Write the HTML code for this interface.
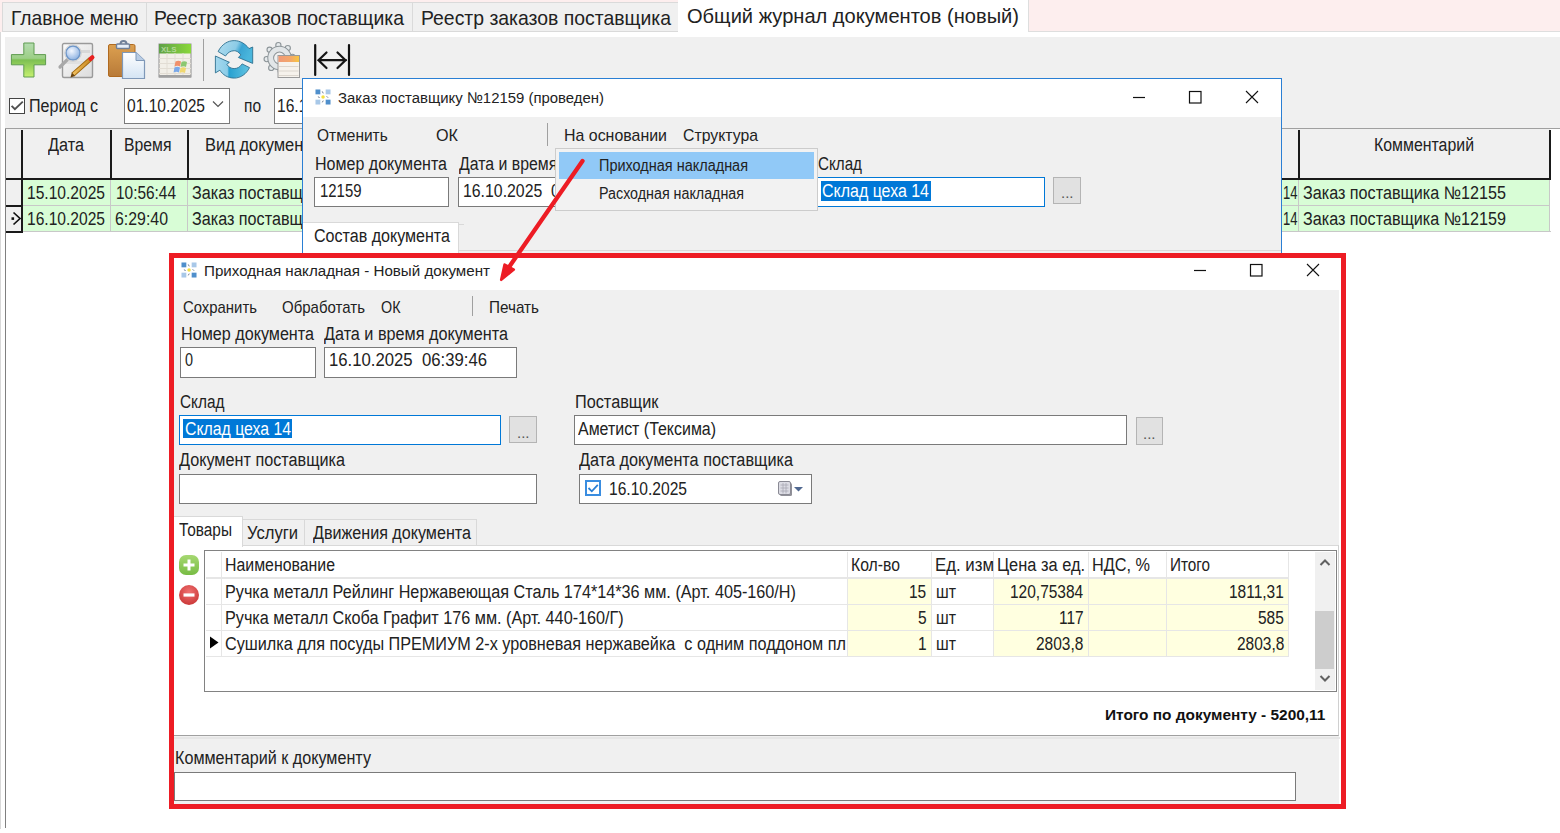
<!DOCTYPE html>
<html><head><meta charset="utf-8"><style>
html,body{margin:0;padding:0;}
body{width:1560px;height:833px;position:relative;overflow:hidden;background:#fff;font-family:"Liberation Sans",sans-serif;}
.t{position:absolute;line-height:1;white-space:pre;}
.b{position:absolute;box-sizing:border-box;}
svg{position:absolute;overflow:visible;}
</style></head><body>
<div class="b" style="left:0px;top:0px;width:1560px;height:32px;background:#fdeeee;"></div>
<div class="b" style="left:0px;top:32px;width:1560px;height:5px;background:#fff;"></div>
<div class="b" style="left:0px;top:32px;width:1px;height:797px;background:#d9d9d9;"></div>
<div class="b" style="left:2px;top:2px;width:145px;height:30px;background:#f0f0f0;border:1px solid #dadada;"></div>
<div class="b" style="left:146px;top:2px;width:267px;height:30px;background:#f0f0f0;border:1px solid #dadada;"></div>
<div class="b" style="left:412px;top:2px;width:267px;height:30px;background:#f0f0f0;border:1px solid #dadada;"></div>
<div class="b" style="left:678px;top:0px;width:350px;height:37px;background:#fff;"></div>
<div class="b" style="left:1028px;top:0px;width:532px;height:32px;background:#fdeeee;border-left:1px solid #dedede;border-bottom:1px solid #dedede;"></div>
<div class="t" style="left:10.80px;top:7px;font-size:21px;color:#222;transform:scaleX(0.9137);transform-origin:0 0;">Главное меню</div>
<div class="t" style="left:154.40px;top:7px;font-size:21px;color:#222;transform:scaleX(0.9236);transform-origin:0 0;">Реестр заказов поставщика</div>
<div class="t" style="left:420.80px;top:7px;font-size:21px;color:#222;transform:scaleX(0.9236);transform-origin:0 0;">Реестр заказов поставщика</div>
<div class="t" style="left:687.10px;top:5px;font-size:21px;color:#222;transform:scaleX(0.9563);transform-origin:0 0;">Общий журнал документов (новый)</div>
<div class="b" style="left:5px;top:37px;width:1555px;height:91px;background:#f0f0f0;"></div>
<div class="b" style="left:9px;top:98px;width:16px;height:16px;background:#fff;border:1px solid #444;"></div>
<svg style="left:9px;top:98px" width="16" height="16"><path d="M2.6 7.9 L5.9 11.2 L13.8 3.6" fill="none" stroke="#505050" stroke-width="1.9"/></svg>
<div class="t" style="left:29.00px;top:97px;font-size:18px;color:#222;transform:scaleX(0.8946);transform-origin:0 0;">Период с</div>
<div class="b" style="left:124px;top:88px;width:106px;height:36px;background:#fff;border:1px solid #7a7a7a;"></div>
<div class="t" style="left:127.00px;top:97px;font-size:18px;color:#222;transform:scaleX(0.8658);transform-origin:0 0;">01.10.2025</div>
<svg style="left:212px;top:100px" width="12" height="8"><path d="M1 1.5 L6 6.5 L11 1.5" fill="none" stroke="#555" stroke-width="1.2"/></svg>
<div class="t" style="left:244.00px;top:97px;font-size:18px;color:#222;transform:scaleX(0.8605);transform-origin:0 0;">по</div>
<div class="b" style="left:274px;top:88px;width:106px;height:36px;background:#fff;border:1px solid #7a7a7a;"></div>
<div class="t" style="left:277.00px;top:97px;font-size:18px;color:#222;transform:scaleX(0.8658);transform-origin:0 0;">16.10.2025</div>
<div class="b" style="left:5px;top:128px;width:1555px;height:1px;background:#a0a0a0;"></div>
<div class="b" style="left:5px;top:129px;width:1px;height:699px;background:#808080;"></div>
<div class="b" style="left:6px;top:129px;width:1544px;height:49px;background:#f0f0f0;"></div>
<div class="b" style="left:6px;top:178px;width:1545px;height:2px;background:#1a1a1a;"></div>
<div class="b" style="left:22px;top:180px;width:1528px;height:52px;background:#d8fdd6;"></div>
<div class="b" style="left:22px;top:205px;width:1528px;height:1px;background:#c8c8c8;"></div>
<div class="b" style="left:22px;top:231px;width:1529px;height:1px;background:#c8c8c8;"></div>
<div class="b" style="left:6px;top:180px;width:15px;height:52px;background:#f0f0f0;"></div>
<div class="b" style="left:6px;top:205px;width:16px;height:2px;background:#1a1a1a;"></div>
<div class="b" style="left:6px;top:231px;width:16px;height:2px;background:#1a1a1a;"></div>
<div class="b" style="left:21px;top:130px;width:2px;height:50px;background:#1a1a1a;"></div>
<div class="b" style="left:110px;top:130px;width:2px;height:50px;background:#1a1a1a;"></div>
<div class="b" style="left:187px;top:130px;width:2px;height:50px;background:#1a1a1a;"></div>
<div class="b" style="left:1298px;top:130px;width:2px;height:50px;background:#1a1a1a;"></div>
<div class="b" style="left:1549px;top:130px;width:2px;height:50px;background:#1a1a1a;"></div>
<div class="b" style="left:110px;top:180px;width:1px;height:52px;background:#c8c8c8;"></div>
<div class="b" style="left:187px;top:180px;width:1px;height:52px;background:#c8c8c8;"></div>
<div class="b" style="left:1298px;top:180px;width:1px;height:52px;background:#c8c8c8;"></div>
<div class="b" style="left:1549px;top:180px;width:1px;height:52px;background:#c8c8c8;"></div>
<div class="b" style="left:21px;top:130px;width:2px;height:103px;background:#1a1a1a;"></div>
<div class="t" style="left:48.00px;top:135.5px;font-size:18px;color:#222;transform:scaleX(0.9029);transform-origin:0 0;">Дата</div>
<div class="t" style="left:124.20px;top:135.5px;font-size:18px;color:#222;transform:scaleX(0.8756);transform-origin:0 0;">Время</div>
<div class="t" style="left:205.00px;top:135.5px;font-size:18px;color:#222;transform:scaleX(0.9173);transform-origin:0 0;">Вид документа</div>
<div class="t" style="left:1374.00px;top:135.5px;font-size:18px;color:#222;transform:scaleX(0.8822);transform-origin:0 0;">Комментарий</div>
<div class="t" style="left:27.40px;top:184px;font-size:18px;color:#222;transform:scaleX(0.8658);transform-origin:0 0;">15.10.2025</div>
<div class="t" style="left:116.00px;top:184px;font-size:18px;color:#222;transform:scaleX(0.8563);transform-origin:0 0;">10:56:44</div>
<div class="t" style="left:192.00px;top:184px;font-size:18px;color:#222;transform:scaleX(0.8977);transform-origin:0 0;">Заказ поставщика №12155</div>
<div class="t" style="left:27.40px;top:210px;font-size:18px;color:#222;transform:scaleX(0.8658);transform-origin:0 0;">16.10.2025</div>
<div class="t" style="left:115.00px;top:210px;font-size:18px;color:#222;transform:scaleX(0.8822);transform-origin:0 0;">6:29:40</div>
<div class="t" style="left:192.00px;top:210px;font-size:18px;color:#222;transform:scaleX(0.8977);transform-origin:0 0;">Заказ поставщика №12159</div>
<div class="t" style="left:1282.50px;top:184px;font-size:18px;color:#222;transform:scaleX(0.7241);transform-origin:0 0;">14</div>
<div class="t" style="left:1282.50px;top:210px;font-size:18px;color:#222;transform:scaleX(0.7241);transform-origin:0 0;">14</div>
<div class="t" style="left:1303.00px;top:184px;font-size:18px;color:#222;transform:scaleX(0.8977);transform-origin:0 0;">Заказ поставщика №12155</div>
<div class="t" style="left:1303.00px;top:210px;font-size:18px;color:#222;transform:scaleX(0.8977);transform-origin:0 0;">Заказ поставщика №12159</div>
<svg style="left:10px;top:211px" width="12" height="15"><path d="M3.5 1.5 L10 7.5 L3.5 13.5" fill="none" stroke="#111" stroke-width="1.7"/><rect x="1.5" y="6.3" width="2.6" height="2.6" fill="#111"/></svg>
<svg style="left:10px;top:42px" width="38" height="38" viewBox="0 0 38 38">
<defs><linearGradient id="gp" x1="0" y1="0" x2="0" y2="1"><stop offset="0" stop-color="#b4dcb0"/><stop offset="0.45" stop-color="#9ccf86"/><stop offset="0.5" stop-color="#7dc052"/><stop offset="1" stop-color="#c6f070"/></linearGradient></defs>
<path d="M13.8 1 H24 V12.6 H35.6 V22.8 H24 V35 H13.8 V22.8 H1.4 V12.6 H13.8 Z" fill="url(#gp)" stroke="#5f9c50" stroke-width="1"/>
</svg>
<svg style="left:57px;top:42px" width="40" height="38" viewBox="0 0 40 38">
<defs><linearGradient id="dg" x1="0" y1="0" x2="1" y2="1"><stop offset="0" stop-color="#fafafa"/><stop offset="1" stop-color="#dcdcdc"/></linearGradient>
<radialGradient id="lg" cx="0.4" cy="0.35" r="0.7"><stop offset="0" stop-color="#f4f8ff"/><stop offset="1" stop-color="#88aee0"/></radialGradient>
<linearGradient id="pg" x1="0" y1="0" x2="1" y2="0"><stop offset="0" stop-color="#f0c060"/><stop offset="1" stop-color="#c88820"/></linearGradient></defs>
<rect x="5.5" y="1.5" width="30" height="34" rx="1.5" fill="url(#dg)" stroke="#9a9a9a" stroke-width="1.4"/>
<rect x="20" y="8" width="13" height="3" fill="#d8d8d8"/><rect x="8" y="19" width="24" height="3" fill="#e0e0e0"/>
<path d="M3 25 L10.5 17.5" stroke="#a8a8a8" stroke-width="3.2" stroke-linecap="round"/>
<circle cx="16" cy="11" r="7" fill="url(#lg)" stroke="#6e96c8" stroke-width="1.4"/>
<circle cx="16" cy="11" r="8.3" fill="none" stroke="#cfcfcf" stroke-width="1"/>
<path d="M16 32.5 L33.5 17" stroke="#a0660c" stroke-width="4.6" stroke-linecap="butt"/>
<path d="M16 32.5 L33.5 17" stroke="url(#pg)" stroke-width="3"/>
<path d="M13.5 35.5 L14.8 30.6 L18.2 33.9 Z" fill="#6a4410"/>
<path d="M33.6 16.9 L35.3 15.4" stroke="#e82020" stroke-width="4.4" stroke-linecap="round"/>
</svg>
<svg style="left:106px;top:38px" width="42" height="43" viewBox="0 0 42 43">
<defs><linearGradient id="cb" x1="0" y1="0" x2="0" y2="1"><stop offset="0" stop-color="#dca050"/><stop offset="1" stop-color="#b87a38"/></linearGradient>
<linearGradient id="pp" x1="0" y1="0" x2="0" y2="1"><stop offset="0" stop-color="#ffffff"/><stop offset="1" stop-color="#d4e4f4"/></linearGradient></defs>
<rect x="2.5" y="6.5" width="26.5" height="32" rx="1.5" fill="url(#cb)" stroke="#b06a20" stroke-width="1"/>
<path d="M14.5 6 A3 3 0 0 1 20.5 6" fill="none" stroke="#6f7f98" stroke-width="2"/>
<rect x="10.5" y="6" width="13" height="4.5" rx="1" fill="#e6eef8" stroke="#6f7f98" stroke-width="1.4"/>
<path d="M16.5 14.5 H30 L38.5 22.5 V40.5 H16.5 Z" fill="url(#pp)" stroke="#7f98b8" stroke-width="1.2"/>
<path d="M30 14.5 V22.5 H38.5" fill="#b8cce4" stroke="#7f98b8" stroke-width="1"/>
</svg>
<svg style="left:158px;top:43px" width="34" height="35" viewBox="0 0 34 35">
<defs><linearGradient id="xg" x1="0" y1="0" x2="1" y2="0"><stop offset="0" stop-color="#5fa048"/><stop offset="1" stop-color="#8ad83a"/></linearGradient></defs>
<rect x="1" y="1" width="32" height="33" fill="#f2efe8" stroke="#8f8f8f" stroke-width="1"/>
<rect x="1" y="1" width="32" height="9.5" fill="url(#xg)"/>
<text x="3" y="9" font-family="Liberation Sans" font-size="8" font-weight="bold" fill="#c8e4b4" fill-opacity="0.75">XLS</text>
<path d="M1 15.5 H33 M1 20.5 H33 M1 25.5 H33 M1 30.5 H33 M9 10 V34 M17 10 V34 M25 10 V34" stroke="#e2ddd4" stroke-width="1"/>
<path d="M17.5 18.5 q3 -1.5 5.5 0 l-1 5 q-2.5 -1.5 -5.5 0 Z" fill="#f0906a"/>
<path d="M23.5 19 q3 -1.5 5.5 0 l-1 5 q-2.5 -1.5 -5.5 0 Z" fill="#8cc870"/>
<path d="M16.5 24.5 q3 -1.5 5.5 0 l-1 5 q-2.5 -1.5 -5.5 0 Z" fill="#7aa8e8"/>
<path d="M22.5 25 q3 -1.5 5.5 0 l-1 5 q-2.5 -1.5 -5.5 0 Z" fill="#f0d870"/>
<rect x="1" y="32" width="32" height="2.5" fill="#a0a0a0"/>
</svg>
<div class="b" style="left:203px;top:39px;width:1px;height:42px;background:#a0a0a0;"></div>
<svg style="left:213px;top:39px" width="43" height="42" viewBox="0 0 43 42">
<defs><linearGradient id="rg" x1="0" y1="0" x2="1" y2="0.3"><stop offset="0" stop-color="#b2def0"/><stop offset="0.55" stop-color="#8ccbe6"/><stop offset="0.7" stop-color="#3aa4d2"/><stop offset="1" stop-color="#4ab6dc"/></linearGradient>
<linearGradient id="rg2" x1="0" y1="0" x2="1" y2="0"><stop offset="0" stop-color="#a4d8ee"/><stop offset="0.35" stop-color="#8ccde8"/><stop offset="0.4" stop-color="#28a0d0"/><stop offset="1" stop-color="#62c4e2"/></linearGradient></defs>
<path d="M5.1 12.5 C9 5 15 1.6 21.2 1.6 C27 1.6 32 4.5 36 9.6 L39.7 8 L39.7 24.4 L25.4 18.5 L27.8 15.9 C25.8 13 23.5 11.7 21.2 11.7 C17.5 11.7 14.5 13.8 12.5 17 Z" fill="url(#rg)" stroke="#2f7090" stroke-width="0.9" stroke-linejoin="round"/>
<path d="M2.4 17 L16.4 23.3 L13.8 25.4 C15.5 28 18 29.6 21.2 29.6 C24.5 29.6 27.3 27.8 29.1 24.9 L36.5 28.6 C33.5 35 27.5 39.1 21.2 39.1 C14.5 39.1 9.5 35.5 6.9 31.2 L2.4 33.9 Z" fill="url(#rg2)" stroke="#2f7090" stroke-width="0.9" stroke-linejoin="round"/>
</svg>
<svg style="left:260px;top:40px" width="42" height="40" viewBox="0 0 42 40">
<circle cx="18.38" cy="5.15" r="2.6" fill="#e6eaec" stroke="#8d9599" stroke-width="1.1"/><circle cx="9.62" cy="9.71" r="2.6" fill="#e6eaec" stroke="#8d9599" stroke-width="1.1"/><circle cx="6.65" cy="19.12" r="2.6" fill="#e6eaec" stroke="#8d9599" stroke-width="1.1"/><circle cx="11.21" cy="27.88" r="2.6" fill="#e6eaec" stroke="#8d9599" stroke-width="1.1"/><circle cx="20.62" cy="30.85" r="2.6" fill="#e6eaec" stroke="#8d9599" stroke-width="1.1"/><circle cx="29.38" cy="26.29" r="2.6" fill="#e6eaec" stroke="#8d9599" stroke-width="1.1"/><circle cx="32.35" cy="16.88" r="2.6" fill="#e6eaec" stroke="#8d9599" stroke-width="1.1"/><circle cx="27.79" cy="8.12" r="2.6" fill="#e6eaec" stroke="#8d9599" stroke-width="1.1"/>
<circle cx="19.5" cy="18" r="8.8" fill="none" stroke="#8d9599" stroke-width="6.8"/>
<circle cx="19.5" cy="18" r="8.8" fill="none" stroke="#e2e6e8" stroke-width="4.8"/>
<defs><linearGradient id="tg" x1="0" y1="0" x2="1" y2="0"><stop offset="0" stop-color="#f09a78"/><stop offset="0.6" stop-color="#f4a868"/><stop offset="1" stop-color="#f8c640"/></linearGradient></defs>
<rect x="18" y="15.5" width="21.5" height="22" fill="#f6f2ec" stroke="#9a9a9a" stroke-width="1"/>
<rect x="18.5" y="16" width="20.5" height="6" fill="url(#tg)"/>
<path d="M19 26.5 H38.5 M19 31 H38.5 M19 35.5 H38.5" stroke="#dcd6ce" stroke-width="1"/>
</svg>
<svg style="left:310px;top:42px" width="44" height="36" viewBox="0 0 44 36">
<path d="M5.2 3 V33 M39 3 V33" stroke="#111" stroke-width="2.2" stroke-linecap="round"/>
<path d="M8.5 18.2 H36 M16.5 10.5 L8.5 18.2 L16.5 26 M27.5 10.5 L35.5 18.2 L27.5 26" fill="none" stroke="#151515" stroke-width="2.2" stroke-linecap="round" stroke-linejoin="miter"/>
</svg>
<div class="b" style="left:302px;top:78px;width:980px;height:182px;background:#f0f0f0;border:1px solid #2a7fd4;border-bottom:none;"></div>
<div class="b" style="left:303px;top:79px;width:978px;height:38px;background:#fff;"></div>
<svg style="left:315px;top:89px" width="16" height="16" viewBox="0 0 16.5 16.5">
<rect x="0.5" y="0.5" width="5" height="5" fill="#4f8fcc"/><rect x="11" y="0.5" width="5" height="5" fill="#a8c8e8"/>
<rect x="0.5" y="11" width="5" height="5" fill="#a8c8e8"/><rect x="11" y="11" width="5" height="5" fill="#4f8fcc"/>
<circle cx="8.3" cy="8.3" r="1.8" fill="#f4e040"/>
<path d="M7.5 2.5 L8.5 4.5 M3 8 L4.8 8.8 M12 7.5 L13.5 9 M8.5 12 L7.5 13.8" stroke="#6a7a90" stroke-width="1"/>
</svg>
<div class="t" style="left:338.30px;top:89.5px;font-size:15.5px;color:#222;transform:scaleX(0.9621);transform-origin:0 0;">Заказ поставщику №12159 (проведен)</div>
<svg style="left:0px;top:0px" width="1560" height="833">
<path d="M1133 97.5 H1145" stroke="#111" stroke-width="1.2"/>
<rect x="1189.5" y="91.5" width="11.5" height="11.5" fill="none" stroke="#111" stroke-width="1.2"/>
<path d="M1246 91 L1258 103 M1258 91 L1246 103" stroke="#111" stroke-width="1.1"/>
</svg>
<div class="t" style="left:317.10px;top:127px;font-size:17px;color:#222;transform:scaleX(0.9113);transform-origin:0 0;">Отменить</div>
<div class="t" style="left:436.00px;top:127px;font-size:17px;color:#222;transform:scaleX(0.9516);transform-origin:0 0;">ОК</div>
<div class="b" style="left:547px;top:123px;width:1px;height:23px;background:#a0a0a0;"></div>
<div class="t" style="left:564.00px;top:127px;font-size:17px;color:#222;transform:scaleX(0.9368);transform-origin:0 0;">На основании</div>
<div class="t" style="left:683.00px;top:127px;font-size:17px;color:#222;transform:scaleX(0.9298);transform-origin:0 0;">Структура</div>
<div class="t" style="left:314.50px;top:154.5px;font-size:18px;color:#222;transform:scaleX(0.8908);transform-origin:0 0;">Номер документа</div>
<div class="t" style="left:458.50px;top:154.5px;font-size:18px;color:#222;transform:scaleX(0.8805);transform-origin:0 0;">Дата и время документа</div>
<div class="t" style="left:818.00px;top:154.5px;font-size:18px;color:#222;transform:scaleX(0.8444);transform-origin:0 0;">Склад</div>
<div class="b" style="left:314px;top:177px;width:135px;height:30px;background:#fff;border:1px solid #7a7a7a;"></div>
<div class="t" style="left:319.50px;top:181.5px;font-size:18px;color:#222;transform:scaleX(0.8293);transform-origin:0 0;">12159</div>
<div class="b" style="left:458px;top:177px;width:242px;height:30px;background:#fff;border:1px solid #7a7a7a;"></div>
<div class="t" style="left:463.30px;top:182px;font-size:18px;color:#222;transform:scaleX(0.8802);transform-origin:0 0;">16.10.2025  06:29:40</div>
<div class="b" style="left:817px;top:177px;width:228px;height:30px;background:#fff;border:1px solid #0078d7;"></div>
<div class="b" style="left:821px;top:181px;width:110px;height:20px;background:#0078d7;"></div>
<div class="t" style="left:821.80px;top:181.5px;font-size:18px;color:#fff;transform:scaleX(0.8869);transform-origin:0 0;">Склад цеха 14</div>
<div class="b" style="left:1053px;top:177px;width:28px;height:27px;background:#e1e1e1;border:1px solid #b4b4b4;"></div>
<div class="t" style="left:1061.00px;top:185.5px;font-size:14px;color:#555;transform:scaleX(1.0725);transform-origin:0 0;">...</div>
<div class="b" style="left:303px;top:222px;width:156px;height:38px;background:#fff;border-top:1px solid #d9d9d9;border-right:1px solid #d9d9d9;"></div>
<div class="b" style="left:459px;top:224px;width:5px;height:1px;background:#d9d9d9;"></div>
<div class="b" style="left:459px;top:250px;width:822px;height:1px;background:#d9d9d9;"></div>
<div class="t" style="left:313.50px;top:226.5px;font-size:18px;color:#222;transform:scaleX(0.8923);transform-origin:0 0;">Состав документа</div>
<div class="b" style="left:555px;top:148px;width:263px;height:63px;background:#f2f2f2;border:1px solid #cccccc;"></div>
<div class="b" style="left:559px;top:152px;width:255px;height:27px;background:#91c9f7;"></div>
<div class="t" style="left:599.00px;top:157.8px;font-size:16px;color:#222;transform:scaleX(0.9043);transform-origin:0 0;">Приходная накладная</div>
<div class="t" style="left:599.00px;top:186.2px;font-size:16px;color:#222;transform:scaleX(0.8924);transform-origin:0 0;">Расходная накладная</div>
<div class="b" style="left:174px;top:258px;width:1167px;height:546px;background:#fff;"></div>
<div class="b" style="left:174px;top:290px;width:1165px;height:514px;background:#f0f0f0;"></div>
<svg style="left:181px;top:262px" width="16" height="16" viewBox="0 0 16.5 16.5">
<rect x="0.5" y="0.5" width="5" height="5" fill="#4f8fcc"/><rect x="11" y="0.5" width="5" height="5" fill="#a8c8e8"/>
<rect x="0.5" y="11" width="5" height="5" fill="#a8c8e8"/><rect x="11" y="11" width="5" height="5" fill="#4f8fcc"/>
<circle cx="8.3" cy="8.3" r="1.8" fill="#f4e040"/>
<path d="M7.5 2.5 L8.5 4.5 M3 8 L4.8 8.8 M12 7.5 L13.5 9 M8.5 12 L7.5 13.8" stroke="#6a7a90" stroke-width="1"/>
</svg>
<div class="t" style="left:204.00px;top:263px;font-size:15.5px;color:#222;transform:scaleX(0.9772);transform-origin:0 0;">Приходная накладная - Новый документ</div>
<svg style="left:0px;top:0px" width="1560" height="833">
<path d="M1194 270.5 H1206" stroke="#111" stroke-width="1.2"/>
<rect x="1250.5" y="264.5" width="11.5" height="11.5" fill="none" stroke="#111" stroke-width="1.2"/>
<path d="M1307 264 L1319 276 M1319 264 L1307 276" stroke="#111" stroke-width="1.1"/>
</svg>
<div class="t" style="left:183.00px;top:298.5px;font-size:17px;color:#222;transform:scaleX(0.8758);transform-origin:0 0;">Сохранить</div>
<div class="t" style="left:282.00px;top:298.5px;font-size:17px;color:#222;transform:scaleX(0.8829);transform-origin:0 0;">Обработать</div>
<div class="t" style="left:381.00px;top:298.5px;font-size:17px;color:#222;transform:scaleX(0.8434);transform-origin:0 0;">ОК</div>
<div class="b" style="left:472px;top:296px;width:1px;height:20px;background:#a0a0a0;"></div>
<div class="t" style="left:489.00px;top:298.5px;font-size:17px;color:#222;transform:scaleX(0.8981);transform-origin:0 0;">Печать</div>
<div class="t" style="left:180.50px;top:325px;font-size:18px;color:#222;transform:scaleX(0.8975);transform-origin:0 0;">Номер документа</div>
<div class="t" style="left:324.00px;top:325px;font-size:18px;color:#222;transform:scaleX(0.9000);transform-origin:0 0;">Дата и время документа</div>
<div class="b" style="left:180px;top:347px;width:136px;height:31px;background:#fff;border:1px solid #7a7a7a;"></div>
<div class="t" style="left:184.50px;top:351px;font-size:18px;color:#222;transform:scaleX(0.8008);transform-origin:0 0;">0</div>
<div class="b" style="left:324px;top:347px;width:193px;height:31px;background:#fff;border:1px solid #7a7a7a;"></div>
<div class="t" style="left:328.50px;top:351px;font-size:18px;color:#222;transform:scaleX(0.9286);transform-origin:0 0;">16.10.2025  06:39:46</div>
<div class="t" style="left:179.50px;top:393px;font-size:18px;color:#222;transform:scaleX(0.8540);transform-origin:0 0;">Склад</div>
<div class="b" style="left:179px;top:415px;width:322px;height:30px;background:#fff;border:1px solid #0078d7;"></div>
<div class="b" style="left:183px;top:419px;width:109px;height:19px;background:#0078d7;"></div>
<div class="t" style="left:184.50px;top:419.5px;font-size:18px;color:#fff;transform:scaleX(0.8786);transform-origin:0 0;">Склад цеха 14</div>
<div class="b" style="left:509px;top:416px;width:28px;height:27px;background:#e1e1e1;border:1px solid #b4b4b4;"></div>
<div class="t" style="left:516.50px;top:425.5px;font-size:14px;color:#555;transform:scaleX(1.0725);transform-origin:0 0;">...</div>
<div class="t" style="left:179.00px;top:451px;font-size:18px;color:#222;transform:scaleX(0.9002);transform-origin:0 0;">Документ поставщика</div>
<div class="b" style="left:179px;top:474px;width:358px;height:30px;background:#fff;border:1px solid #7a7a7a;"></div>
<div class="t" style="left:574.50px;top:392.5px;font-size:18px;color:#222;transform:scaleX(0.9038);transform-origin:0 0;">Поставщик</div>
<div class="b" style="left:574px;top:415px;width:553px;height:30px;background:#fff;border:1px solid #7a7a7a;"></div>
<div class="t" style="left:578.00px;top:420px;font-size:18px;color:#222;transform:scaleX(0.8856);transform-origin:0 0;">Аметист (Тексима)</div>
<div class="b" style="left:1136px;top:417px;width:27px;height:28px;background:#e1e1e1;border:1px solid #b4b4b4;"></div>
<div class="t" style="left:1143.00px;top:426.5px;font-size:14px;color:#555;transform:scaleX(1.0725);transform-origin:0 0;">...</div>
<div class="t" style="left:579.00px;top:451px;font-size:18px;color:#222;transform:scaleX(0.9022);transform-origin:0 0;">Дата документа поставщика</div>
<div class="b" style="left:579px;top:474px;width:233px;height:30px;background:#fff;border:1px solid #7a7a7a;"></div>
<div class="b" style="left:585px;top:480px;width:16px;height:16px;background:#fff;border:2px solid #3a8de0;"></div>
<svg style="left:585px;top:480px" width="16" height="16"><path d="M3.5 8 L6.8 11.3 L12.8 4.8" fill="none" stroke="#2a7fd4" stroke-width="1.8"/></svg>
<div class="t" style="left:609.00px;top:479.5px;font-size:18px;color:#222;transform:scaleX(0.8658);transform-origin:0 0;">16.10.2025</div>
<svg style="left:776px;top:480px" width="30" height="18">
<rect x="4" y="3" width="12" height="13" rx="1.5" fill="#909098"/>
<rect x="2.5" y="1.5" width="12" height="13" rx="1.5" fill="#dcdce4" stroke="#8a8a94"/>
<path d="M4.5 5 H12.5 M4.5 8 H12.5 M4.5 11 H12.5 M7 3 V13.5 M10 3 V13.5" stroke="#a8a8b4" stroke-width="0.8"/>
<path d="M18 7 L27 7 L22.5 11.5 Z" fill="#506890"/>
</svg>
<div class="b" style="left:242px;top:519px;width:63px;height:27px;background:#f0f0f0;border:1px solid #d9d9d9;"></div>
<div class="b" style="left:304px;top:519px;width:173px;height:27px;background:#f0f0f0;border:1px solid #d9d9d9;"></div>
<div class="b" style="left:174px;top:545px;width:1165px;height:191px;background:#fff;border-top:1px solid #d9d9d9;border-right:1px solid #d0d0d0;border-bottom:1px solid #a0a0a0;"></div>
<div class="b" style="left:174px;top:516px;width:69px;height:31px;background:#fff;border-top:1px solid #d9d9d9;border-right:1px solid #d9d9d9;"></div>
<div class="t" style="left:179.00px;top:521px;font-size:18px;color:#222;transform:scaleX(0.8559);transform-origin:0 0;">Товары</div>
<div class="t" style="left:247.00px;top:523.5px;font-size:18px;color:#222;transform:scaleX(0.9214);transform-origin:0 0;">Услуги</div>
<div class="t" style="left:312.50px;top:523.5px;font-size:18px;color:#222;transform:scaleX(0.8957);transform-origin:0 0;">Движения документа</div>
<div class="b" style="left:204px;top:550px;width:1133px;height:142px;background:#fff;border:1px solid #828282;border-top-width:1.5px;"></div>
<div class="b" style="left:847px;top:578px;width:84px;height:78px;background:#ffffe0;"></div>
<div class="b" style="left:993px;top:578px;width:95px;height:78px;background:#ffffe0;"></div>
<div class="b" style="left:1088px;top:578px;width:78px;height:78px;background:#ffffe0;"></div>
<div class="b" style="left:1166px;top:578px;width:122px;height:78px;background:#ffffe0;"></div>
<div class="b" style="left:221px;top:552px;width:1px;height:105px;background:#e6e6e6;"></div>
<div class="b" style="left:847px;top:552px;width:1px;height:105px;background:#e6e6e6;"></div>
<div class="b" style="left:931px;top:552px;width:1px;height:105px;background:#e6e6e6;"></div>
<div class="b" style="left:993px;top:552px;width:1px;height:105px;background:#e6e6e6;"></div>
<div class="b" style="left:1088px;top:552px;width:1px;height:105px;background:#e6e6e6;"></div>
<div class="b" style="left:1166px;top:552px;width:1px;height:105px;background:#e6e6e6;"></div>
<div class="b" style="left:1288px;top:552px;width:1px;height:105px;background:#e6e6e6;"></div>
<div class="b" style="left:206px;top:577.3px;width:1083px;height:1.3999999999999773px;background:#e6e6e6;"></div>
<div class="b" style="left:206px;top:603.6px;width:1083px;height:1.3999999999999773px;background:#e6e6e6;"></div>
<div class="b" style="left:206px;top:629.6px;width:1083px;height:1.3999999999999773px;background:#e6e6e6;"></div>
<div class="b" style="left:206px;top:655.6px;width:1083px;height:1.3999999999999773px;background:#e6e6e6;"></div>
<div class="t" style="left:224.50px;top:555.5px;font-size:18px;color:#222;transform:scaleX(0.8815);transform-origin:0 0;">Наименование</div>
<div class="t" style="left:851.00px;top:555.5px;font-size:18px;color:#222;transform:scaleX(0.8753);transform-origin:0 0;">Кол-во</div>
<div class="t" style="left:935.00px;top:555.5px;font-size:18px;color:#222;transform:scaleX(0.9338);transform-origin:0 0;">Ед. изм</div>
<div class="t" style="left:997.00px;top:555.5px;font-size:18px;color:#222;transform:scaleX(0.9104);transform-origin:0 0;">Цена за ед.</div>
<div class="t" style="left:1092.00px;top:555.5px;font-size:18px;color:#222;transform:scaleX(0.9032);transform-origin:0 0;">НДС, %</div>
<div class="t" style="left:1170.00px;top:555.5px;font-size:18px;color:#222;transform:scaleX(0.8482);transform-origin:0 0;">Итого</div>
<div style="position:absolute;left:222px;top:577.5px;width:625px;height:24px;overflow:hidden">
<div class="t" style="left:2.50px;top:5px;font-size:18px;color:#222;transform:scaleX(0.9005);transform-origin:0 0;">Ручка металл Рейлинг Нержавеющая Сталь 174*14*36 мм. (Арт. 405-160/Н)</div>
</div>
<div class="t" style="left:909.28px;top:582.5px;font-size:18px;color:#222;transform:scaleX(0.8600);transform-origin:0 0;">15</div>
<div class="t" style="left:935.50px;top:582.5px;font-size:18px;color:#222;transform:scaleX(0.8818);transform-origin:0 0;">шт</div>
<div class="t" style="left:1010.32px;top:582.5px;font-size:18px;color:#222;transform:scaleX(0.8600);transform-origin:0 0;">120,75384</div>
<div class="t" style="left:1229.20px;top:582.5px;font-size:18px;color:#222;transform:scaleX(0.8600);transform-origin:0 0;">1811,31</div>
<div style="position:absolute;left:222px;top:603.5px;width:625px;height:24px;overflow:hidden">
<div class="t" style="left:2.50px;top:5px;font-size:18px;color:#222;transform:scaleX(0.9005);transform-origin:0 0;">Ручка металл Скоба Графит 176 мм. (Арт. 440-160/Г)</div>
</div>
<div class="t" style="left:917.91px;top:608.5px;font-size:18px;color:#222;transform:scaleX(0.8600);transform-origin:0 0;">5</div>
<div class="t" style="left:935.50px;top:608.5px;font-size:18px;color:#222;transform:scaleX(0.8818);transform-origin:0 0;">шт</div>
<div class="t" style="left:1058.81px;top:608.5px;font-size:18px;color:#222;transform:scaleX(0.8600);transform-origin:0 0;">117</div>
<div class="t" style="left:1258.19px;top:608.5px;font-size:18px;color:#222;transform:scaleX(0.8600);transform-origin:0 0;">585</div>
<div style="position:absolute;left:222px;top:629.5px;width:625px;height:24px;overflow:hidden">
<div class="t" style="left:2.50px;top:5px;font-size:18px;color:#222;transform:scaleX(0.9005);transform-origin:0 0;">Сушилка для посуды ПРЕМИУМ 2-х уровневая нержавейка  с одним поддоном пл</div>
</div>
<div class="t" style="left:917.91px;top:634.5px;font-size:18px;color:#222;transform:scaleX(0.8600);transform-origin:0 0;">1</div>
<div class="t" style="left:935.50px;top:634.5px;font-size:18px;color:#222;transform:scaleX(0.8818);transform-origin:0 0;">шт</div>
<div class="t" style="left:1036.17px;top:634.5px;font-size:18px;color:#222;transform:scaleX(0.8600);transform-origin:0 0;">2803,8</div>
<div class="t" style="left:1236.67px;top:634.5px;font-size:18px;color:#222;transform:scaleX(0.8600);transform-origin:0 0;">2803,8</div>
<svg style="left:208px;top:635px" width="12" height="16"><path d="M2 1.5 L10.5 7.5 L2 13.5 Z" fill="#000"/></svg>
<div class="b" style="left:1315px;top:552px;width:20px;height:138px;background:#f0f0f0;"></div>
<div class="b" style="left:1315px;top:611px;width:19px;height:58px;background:#cdcdcd;"></div>
<svg style="left:1315px;top:552px" width="20" height="138">
<path d="M5.5 13 L10 8.5 L14.5 13" fill="none" stroke="#606060" stroke-width="2"/>
<path d="M5.5 124 L10 128.5 L14.5 124" fill="none" stroke="#606060" stroke-width="2"/>
</svg>
<svg style="left:178px;top:554px" width="24" height="54">
<defs><linearGradient id="gpl" x1="0" y1="0" x2="0" y2="1"><stop offset="0" stop-color="#a6d872"/><stop offset="1" stop-color="#78bc44"/></linearGradient>
<radialGradient id="rmi" cx="0.5" cy="0.35" r="0.7"><stop offset="0" stop-color="#f07070"/><stop offset="1" stop-color="#c83434"/></radialGradient></defs>
<rect x="1" y="1" width="20" height="20" rx="7" fill="url(#gpl)"/>
<path d="M11 5.5 V16.5 M5.5 11 H16.5" stroke="#fff" stroke-width="3"/>
<circle cx="11" cy="41" r="10" fill="url(#rmi)"/>
<path d="M5.5 41 H16.5" stroke="#fff" stroke-width="3.2"/>
</svg>
<div class="t" style="left:1105.00px;top:706.5px;font-size:15px;color:#111;font-weight:bold;transform:scaleX(1.0275);transform-origin:0 0;">Итого по документу - 5200,11</div>
<div class="b" style="left:174px;top:737px;width:1166px;height:2px;background:#e6e6e6;"></div>
<div class="t" style="left:174.50px;top:748.5px;font-size:18px;color:#222;transform:scaleX(0.8973);transform-origin:0 0;">Комментарий к документу</div>
<div class="b" style="left:174px;top:772px;width:1122px;height:29px;background:#fff;border:1px solid #7a7a7a;"></div>
<div class="b" style="left:169px;top:253px;width:1177px;height:556px;background:transparent;border:5px solid #ed1c24;"></div>
<svg style="left:0;top:0" width="1560" height="833">
<path d="M582.5 161 L507 270" stroke="#ed1c24" stroke-width="4.3" stroke-linecap="round"/>
<path d="M501.2 279.8 L504.6 264.6 L513.8 269.6 Z" fill="#ed1c24" stroke="#ed1c24" stroke-width="2.6" stroke-linejoin="round"/>
</svg>
</body></html>
